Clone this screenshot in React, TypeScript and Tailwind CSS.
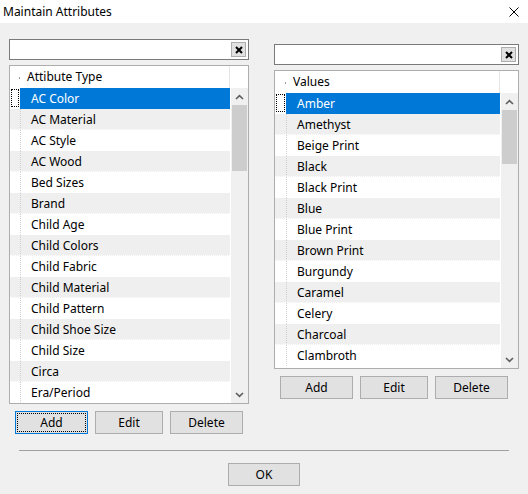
import React from "react";

const TYPES = [
  "AC Color", "AC Material", "AC Style", "AC Wood", "Bed Sizes", "Brand",
  "Child Age", "Child Colors", "Child Fabric", "Child Material", "Child Pattern",
  "Child Shoe Size", "Child Size", "Circa", "Era/Period",
];

const VALUES = [
  "Amber", "Amethyst", "Beige Print", "Black", "Black Print", "Blue", "Blue Print",
  "Brown Print", "Burgundy", "Caramel", "Celery", "Charcoal", "Clambroth",
];

const FONT = { fontFamily: '"Noto Sans", "Segoe UI", Arial, sans-serif' };

function Chevron({ down }: { down?: boolean }) {
  return (
    <svg width="9" height="6" viewBox="0 0 9 6" className={down ? "rotate-180" : ""}>
      <polyline points="1,5 4.5,1.6 8,5" fill="none" stroke="#606060" strokeWidth="1.7" />
    </svg>
  );
}

function SearchBox({ width }: { width: string }) {
  return (
    <div className={`${width} h-[21px] bg-white border border-[#7a7a7a] flex justify-end items-center pr-[2px]`}>
      <div className="w-[15px] h-[15px] bg-[#e1e1e1] border border-[#adadad] flex items-center justify-center">
        <svg width="8" height="8" viewBox="0 0 8 8">
          <path d="M1 1 L7 7 M7 1 L1 7" stroke="#000" strokeWidth="2" />
        </svg>
      </div>
    </div>
  );
}

function Grid({
  header,
  rows,
  width,
  bodyH,
  thumbH,
  selW,
}: {
  header: string;
  rows: string[];
  width: string;
  bodyH: string;
  thumbH: string;
  selW: string;
}) {
  return (
    <div className={`${width} border border-[#adadad] bg-white flex flex-col`}>
      {/* header */}
      <div className="h-[22px] flex items-center text-[12px] leading-[16px] text-black">
        <div className={`${selW} h-full relative`}>
          <span className="absolute right-0 top-[11px] w-px h-[2px] bg-[#9a9a9a]" />
        </div>
        <div className="flex-1 h-full flex items-center pl-[7px] border-r border-[#e5e5e5]">{header}</div>
        <div className="w-[18px]" />
      </div>
      {/* body */}
      <div className={`${bodyH} flex overflow-hidden`}>
        <div className="flex-1 flex flex-col">
          {rows.map((r, i) => {
            const bg = i === 0 ? "bg-[#0078d7] text-white" : i % 2 ? "bg-[#efefef] text-black" : "bg-white text-black";
            return (
              <div key={r} className="h-[21px] shrink-0 flex text-[12px] leading-[16px]">
                <div
                  className={`${selW} h-full border-b border-dotted border-white ${
                    i === 0 ? "bg-white p-px" : i % 2 ? "bg-[#efefef]" : "bg-white"
                  }`}
                >
                  {i === 0 && <div className="w-full h-full border border-dotted border-black" />}
                </div>
                <div
                  className={`flex-1 h-full flex items-center pl-[10px] pt-px border-b border-dotted border-white border-l ${
                    i === 0 ? "border-l-[#0078d7] border-b-[#0078d7]" : "border-l-[#d0d0d0]"
                  } ${bg}`}
                >
                  {r}
                </div>
              </div>
            );
          })}
        </div>
        <div className="w-[18px] bg-[#f0f0f0] flex flex-col border-l border-white">
          <div className="h-[17px] flex items-center justify-center">
            <Chevron />
          </div>
          <div className={`${thumbH} mx-[1px] bg-[#cdcdcd]`} />
          <div className="flex-1" />
          <div className="h-[17px] flex items-center justify-center">
            <Chevron down />
          </div>
        </div>
      </div>
    </div>
  );
}

function Btn({ label, width, focus }: { label: string; width: string; focus?: boolean }) {
  return (
    <div
      className={`${width} h-[23px] bg-[#e1e1e1] border ${
        focus ? "border-[#0078d7] p-px" : "border-[#adadad]"
      } text-[12px] leading-[16px] text-black`}
    >
      <div className={`w-full h-full flex items-center justify-center ${focus ? "border border-dotted border-black" : ""}`}>
        {label}
      </div>
    </div>
  );
}

export default function App() {
  return (
    <div className="w-[528px] h-[494px] bg-[#f0f0f0] flex flex-col overflow-hidden" style={FONT}>
      {/* title bar */}
      <div className="h-[23px] bg-white flex items-center justify-between pl-[3px] pr-[9px] text-[12px] leading-[16px] text-black">
        <span>Maintain Attributes</span>
        <svg width="10" height="10" viewBox="0 0 10 10">
          <path d="M0.5 0.5 L9.5 9.5 M9.5 0.5 L0.5 9.5" stroke="#000" strokeWidth="1" />
        </svg>
      </div>

      <div className="flex items-start pl-[9px] pt-[16px] gap-[25px]">
        {/* left panel */}
        <div className="flex flex-col">
          <SearchBox width="w-[240px]" />
          <div className="mt-[5px]">
            <Grid header="Attibute Type" rows={TYPES} width="w-[240px]" bodyH="h-[315px]" thumbH="h-[66px]" selW="w-[10px]" />
          </div>
          <div className="flex gap-[7px] pl-[6px] mt-[7px]">
            <Btn label="Add" width="w-[73px]" focus />
            <Btn label="Edit" width="w-[68px]" />
            <Btn label="Delete" width="w-[73px]" />
          </div>
        </div>

        {/* right panel */}
        <div className="flex flex-col mt-[5px]">
          <SearchBox width="w-[245px]" />
          <div className="mt-[5px]">
            <Grid header="Values" rows={VALUES} width="w-[245px]" bodyH="h-[275px]" thumbH="h-[54px]" selW="w-[11px]" />
          </div>
          <div className="flex gap-[7px] pl-[6px] mt-[7px]">
            <Btn label="Add" width="w-[73px]" />
            <Btn label="Edit" width="w-[68px]" />
            <Btn label="Delete" width="w-[73px]" />
          </div>
        </div>
      </div>

      {/* separator + OK */}
      <div className="mt-[16px] ml-[19px] w-[490px] border-t border-[#a0a0a0]" />
      <div className="flex justify-center mt-[12px]">
        <Btn label="OK" width="w-[72px]" />
      </div>
    </div>
  );
}
